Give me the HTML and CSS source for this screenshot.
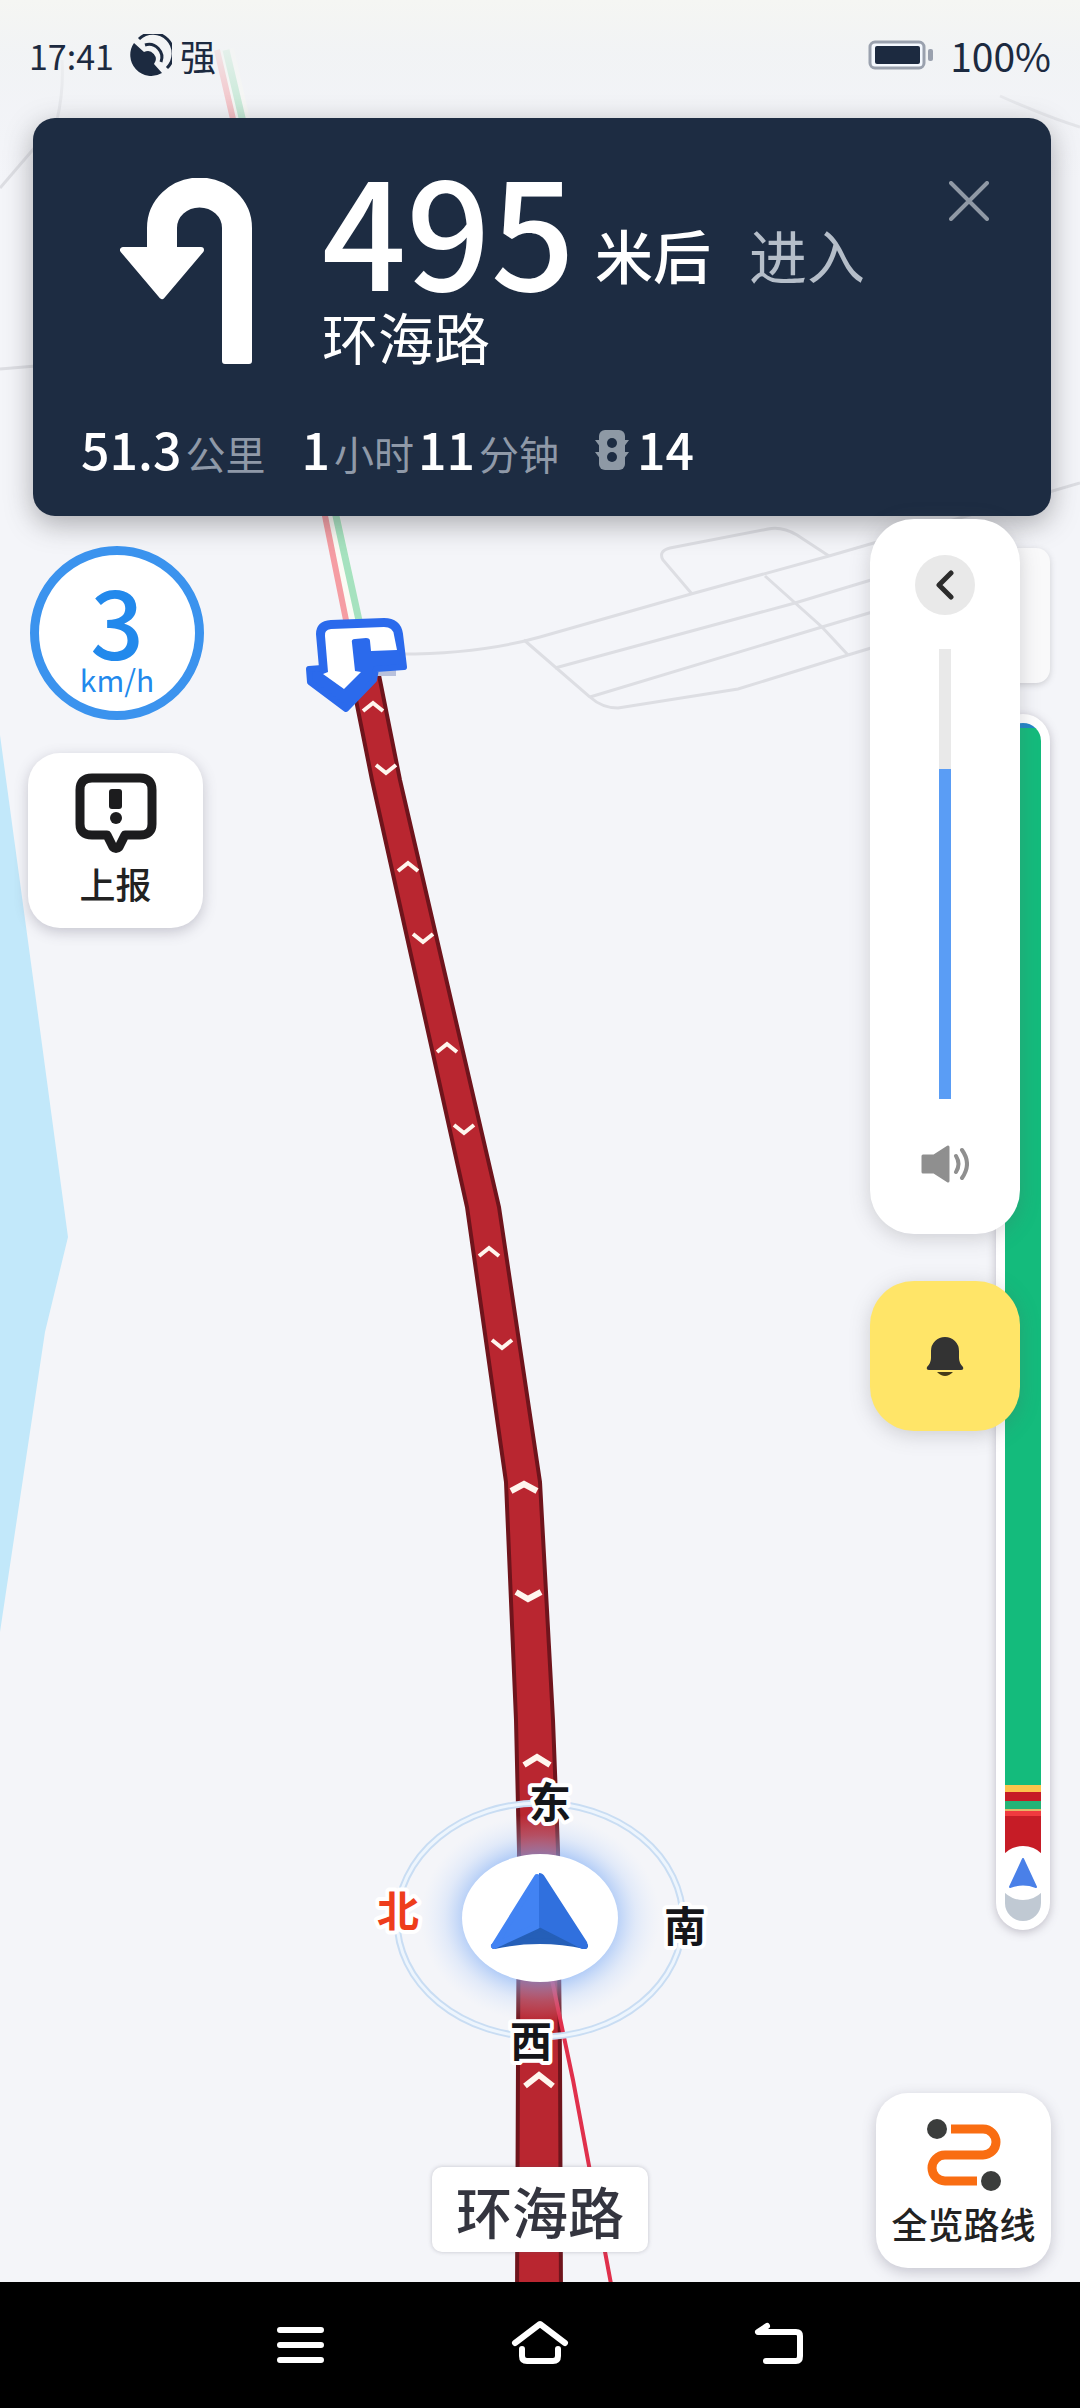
FILE: index.html
```html
<!DOCTYPE html>
<html lang="zh-CN">

<head>
  <meta charset="UTF-8">
  <meta name="viewport" content="width=device-width, initial-scale=1">
  <title>导航</title>
  <link rel="stylesheet" href="styles.css">
</head>
<body>
  <main class="map">
    <svg class="map-canvas" viewBox="0 0 1080 2282" preserveAspectRatio="xMidYMin slice" aria-hidden="true">
      <defs>
        <radialGradient id="glow">
          <stop offset="0.6" stop-color="#7aaaf5" stop-opacity="0.6"/>
          <stop offset="0.8" stop-color="#a9c8f8" stop-opacity="0.25"/>
          <stop offset="1" stop-color="#cfe0fb" stop-opacity="0"/>
        </radialGradient>
        <linearGradient id="fade" x1="0" y1="0" x2="0" y2="1">
          <stop offset="0" stop-color="#f5f6f3"/>
          <stop offset="0.3" stop-color="#f1f3f4" stop-opacity="0.8"/>
          <stop offset="1" stop-color="#eef0f5" stop-opacity="0"/>
        </linearGradient>
        <path id="up" d="M-10 4 L0 -4 L10 4"/>
        <path id="down" d="M-10 -4 L0 4 L10 -4"/>
      </defs>
      <!-- water -->
      <path fill="#c2e8fa" d="M0 735 L36 1000 L68 1237 L45 1332 L0 1632 Z"/>
      <!-- side roads -->
      <g fill="none" stroke="#dddee3" stroke-width="3">
        <path d="M400 654 Q480 654 540 637 L691 594 L829 556 L1080 483"/>
        <path d="M555 668 L795 603 L1000 541"/>
        <path d="M590 697 L822 627 L1000 574"/>
        <path d="M524 640 L590 697 Q602 708 618 708 L738 689 L848 655 L1000 609"/>
        <path d="M765 576 L822 627 L848 655"/>
        <path d="M692 594 L663 560 Q658 551 670 548 L768 529 Q782 526 797 535 L829 556"/>
        <path d="M0 188 L36 146 M0 369 L36 366 M62 60 Q64 90 57 120 M1000 96 Q1050 118 1080 127"/>
      </g>
      <!-- road ahead -->
      <g fill="none">
        <path stroke="#fbfbf5" stroke-width="18" d="M225 50 L331 516 L354 625"/>
        <path stroke="#f59da3" stroke-width="6" d="M217 50 L325 516 L347 625"/>
        <path stroke="#a6e2bf" stroke-width="7" d="M226 50 L336 516 L360 625"/>
      </g>
      <!-- route -->
      <path fill="#b92630" stroke="#6f141c" stroke-width="4" d="M354 690 L372 780 L421 1000 L467 1207 L506 1482 L516 1720 L519 1850 L518 2060 L517 2300 L561 2300 L560 2060 L558 1850 L553 1720 L540 1482 L499 1207 L451 1000 L400 780 L376 660 Z"/>
      <g fill="none" stroke="#fff6ee" stroke-width="4">
        <use href="#up" x="373" y="707"/>
        <use href="#down" x="386" y="769"/>
        <use href="#up" x="408" y="867"/>
        <use href="#down" x="423" y="938"/>
        <use href="#up" x="447" y="1048"/>
        <use href="#down" x="464" y="1129"/>
        <use href="#up" x="489" y="1252"/>
        <use href="#down" x="502" y="1344"/>
      </g>
      <g fill="none" stroke="#fff6ee" stroke-width="6">
        <path d="M511 1491 L524 1484 L537 1491 M516 1592 L528 1599 L541 1592"/>
        <path d="M524 1765 L537 1757 L550 1765 M525 2086 L539 2075 L553 2086"/>
      </g>
      <!-- turn marker -->
      <path fill="#b9c1dc" d="M376 664 h20 v12 h-20 z"/>
      <path fill="#2b6aec" stroke="#2b6aec" stroke-width="6" stroke-linejoin="round" d="M322 668 L319 634 Q319 624 331 623 L384 621 Q398 621 400 634 L404 667 L376 669 L374 680 L346 709 L310 682 L309 669 Z"/>
      <path fill="#fff" d="M325 636 Q324 630 331 629 L384 627 Q393 627 394 635 L397 650 L371 651 L370 641 Q370 638 366 638 L355 639 Q351 639 352 643 L355 671 L361 672 L344 689 L323 674 L328 672 Z"/>
      <!-- compass and car -->
      <path fill="none" stroke="#e0304c" stroke-width="4" d="M552 1980 L573 2080 L614 2300"/>
      <ellipse cx="540" cy="1918" rx="120" ry="104" fill="url(#glow)"/>
      <ellipse cx="540" cy="1920" rx="143" ry="117" fill="none" stroke="#c9ddf3" stroke-width="7"/>
      <ellipse cx="540" cy="1920" rx="143" ry="117" fill="none" stroke="#edf5fd" stroke-width="3"/>
      <ellipse cx="540" cy="1918" rx="78" ry="64" fill="#fff"/>
      <path fill="#255fb8" stroke="#255fb8" stroke-width="6" stroke-linejoin="round" d="M540 1928 L494 1946 Q540 1936 585 1946 Z"/>
      <path fill="#4283f3" stroke="#4283f3" stroke-width="6" stroke-linejoin="round" d="M537 1877 L494 1946 L537 1926 Z"/>
      <path fill="#3070de" d="M539 1873 Q543 1873 545 1877 L587 1942 Q590 1950 582 1949 L539 1927 Z"/>
      <g class="compass-text">
        <text x="550" y="1818">东</text>
        <text x="685" y="1942">南</text>
        <text x="531" y="2057">西</text>
        <text class="north" x="398" y="1927">北</text>
      </g>
      <rect width="1080" height="180" fill="url(#fade)"/>
    </svg>

    <header class="status">
      <span class="status-side">
        <time>17:41</time>
        <svg class="gps" viewBox="0 0 42 42" aria-hidden="true">
          <path fill="#1c2a40" d="M4 9 A21 21 0 0 0 32 39 L24 30 A8 8 0 0 0 14 18 Z"/>
          <g fill="none" stroke="#1c2a40" stroke-width="3">
            <path d="M9 5 A19 19 0 0 1 37 34"/>
            <path d="M15 11 A13 13 0 0 1 31 28"/>
          </g>
        </svg>
        <span>强</span>
      </span>
      <span class="status-side">
        <svg class="battery" viewBox="0 0 66 30" aria-hidden="true">
          <rect x="2" y="2" width="54" height="26" rx="5" fill="#f4f8fe" stroke="#9aa1ae" stroke-width="3"/>
          <rect x="7" y="6" width="45" height="18" rx="2" fill="#1c2a40"/>
          <rect x="60" y="9" width="5" height="12" rx="2" fill="#9aa1ae"/>
        </svg>
        <span class="percent">100%</span>
      </span>
    </header>

    <section class="banner">
      <div class="turn">
        <svg class="turn-icon" viewBox="0 0 132 186" aria-hidden="true">
          <path fill="#fff" stroke="#fff" stroke-width="6" stroke-linejoin="round" d="M30 72 V50 A49 47 0 0 1 129 50 V183 H105 V50 A25 23 0 0 0 54 50 V72 H81 L42 118 L3 72 Z"/>
        </svg>
        <div class="turn-text">
          <p class="distance"><strong>495</strong><span>米后</span><span class="enter">进入</span></p>
          <p class="road">环海路</p>
        </div>
        <button class="close" type="button" aria-label="关闭">
          <svg viewBox="0 0 40 40" aria-hidden="true"><path fill="none" stroke="#9099a5" stroke-width="4" stroke-linecap="round" d="M2 2 L38 38 M38 2 L2 38"/></svg>
        </button>
      </div>
      <p class="trip">
        <span><b>51.3</b>公里</span>
        <span><b>1</b>小时<b class="minutes">11</b>分钟</span>
        <span class="lights">
          <svg viewBox="0 0 34 40" aria-hidden="true">
            <path fill="#8e99a5" d="M0 10 H34 L28 18 H6 Z M0 22 H34 L28 30 H6 Z"/>
            <rect x="4" width="26" height="40" rx="6" fill="#8e99a5"/>
            <circle cx="17" cy="13" r="5" fill="#1d2c42"/>
            <circle cx="17" cy="27" r="5" fill="#1d2c42"/>
          </svg>
          <b>14</b>
        </span>
      </p>
    </section>

    <section class="middle">
      <div class="left">
        <div class="speed">
          <strong>3</strong>
          <span>km/h</span>
        </div>
        <button class="card report" type="button">
          <svg viewBox="0 0 82 80" aria-hidden="true">
            <path fill="none" stroke="#1c1c1e" stroke-width="9" stroke-linejoin="round" d="M17 5 H65 Q77 5 77 17 V51 Q77 62 65 62 H50 L44 74 Q41 77 38 74 L32 62 H17 Q5 62 5 51 V17 Q5 5 17 5 Z"/>
            <rect x="34" y="16" width="13" height="20" rx="3" fill="#1c1c1e"/>
            <circle cx="41" cy="45" r="6" fill="#1c1c1e"/>
          </svg>
          上报
        </button>
      </div>

      <div class="right">
        <div class="ghost"></div>
        <div class="traffic">
          <div class="traffic-bar">
            <i class="blue"></i>
            <i class="green"></i>
            <i class="yellow"></i>
            <i class="jam"></i>
            <i class="green-short"></i>
            <i class="yellow-short"></i>
            <i class="red"></i>
            <i class="jam-long"></i>
            <i class="passed"></i>
          </div>
          <span class="knob">
            <svg viewBox="0 0 28 31" aria-hidden="true"><path fill="#4a80e8" stroke="#4a80e8" stroke-width="2" stroke-linejoin="round" d="M14 1 L27 29 Q14 24 1 29 Z"/></svg>
          </span>
        </div>
        <div class="float">
          <div class="volume">
            <button class="back" type="button" aria-label="收起">
              <svg viewBox="0 0 18 30" aria-hidden="true"><path fill="none" stroke="#2c2c2c" stroke-width="5" stroke-linecap="round" stroke-linejoin="round" d="M15 3 L3 15 L15 27"/></svg>
            </button>
            <input class="slider" type="range" min="0" max="15" value="11" aria-label="音量">
            <svg class="speaker" viewBox="0 0 48 38" aria-hidden="true">
              <path fill="#8f8f8f" stroke="#8f8f8f" stroke-width="3" stroke-linejoin="round" d="M2 11 H13 L27 2 V36 L13 27 H2 Z"/>
              <path fill="none" stroke="#8f8f8f" stroke-width="4" stroke-linecap="round" d="M35 11 Q40 19 35 27 M41 5 Q51 19 41 33"/>
            </svg>
          </div>
          <button class="bell" type="button" aria-label="提醒">
            <svg viewBox="0 0 38 42" aria-hidden="true">
              <path fill="#333" d="M5 16 A14 14 0 0 1 33 16 V23 Q33 28 37 32 Q38 35 35 35 H3 Q0 35 1 32 Q5 28 5 23 Z"/>
              <path fill="#453a18" d="M11 37 H27 Q19 45 11 37 Z"/>
            </svg>
          </button>
        </div>
      </div>
    </section>

    <footer class="bottom">
      <span class="road-label">环海路</span>
      <button class="card overview" type="button">
        <svg viewBox="0 0 74 72" aria-hidden="true">
          <path fill="none" stroke="#f96d12" stroke-width="9" d="M24 10 H56 A13 13 0 0 1 56 36 H18 A13 13 0 0 0 18 62 H50"/>
          <circle cx="10" cy="10" r="10" fill="#3b3d3c"/>
          <circle cx="64" cy="62" r="10" fill="#3b3d3c"/>
        </svg>
        全览路线
      </button>
    </footer>
  </main>

  <nav class="system">
    <button type="button" aria-label="最近任务">
      <svg viewBox="0 0 60 50"><path d="M10 10 H51 M10 25 H51 M10 40 H51"/></svg>
    </button>
    <button type="button" aria-label="主页">
      <svg viewBox="0 0 60 50"><path d="M5 23 L30 4 L55 23 M12 29 V36 Q12 41 17 41 H43 Q48 41 48 36 V29"/></svg>
    </button>
    <button type="button" aria-label="返回">
      <svg viewBox="0 0 60 50"><path d="M17 6 L8 12 H46 Q50 12 50 16 V36 Q50 41 46 41 H16"/></svg>
    </button>
  </nav>
</body>

</html>
```
FILE: styles.css
```css
* {
  margin: 0;
  padding: 0;
  box-sizing: border-box;
}

body {
  min-height: 100vh;
  display: flex;
  flex-direction: column;
  background: #000;
  font-family: "Noto Sans CJK SC", "Noto Sans", sans-serif;
  font-size: 36px;
}

button {
  border: none;
  background: none;
  font: inherit;
  cursor: pointer;
}

svg {
  display: block;
}

.map {
  flex: 1;
  position: relative;
  display: flex;
  flex-direction: column;
  overflow: hidden;
  background: #f4f5f9;
}

/* map lies under all the panels */
.map-canvas {
  position: absolute;
  top: 0;
  left: 0;
  width: 100%;
  height: 100%;
}

.compass-text {
  font-size: 42px;
  font-weight: bold;
  text-anchor: middle;
  fill: #15161a;
  stroke: #fff;
  stroke-width: 8px;
  stroke-linejoin: round;
  paint-order: stroke;
}

.north {
  fill: #ee3d1c;
}

.status,
.banner,
.middle,
.bottom {
  position: relative;
}

.status {
  height: 118px;
  padding: 0 29px;
  display: flex;
  align-items: center;
  justify-content: space-between;
  color: #1c2a40;
}

.status-side {
  display: flex;
  align-items: center;
  gap: 16px;
  height: 52px;
  margin-bottom: 8px;
}

.status time {
  font-size: 34px;
}

.status .percent {
  font-size: 39px;
}

.gps {
  width: 42px;
  height: 42px;
  margin-right: -8px;
}

.battery {
  width: 66px;
  height: 30px;
}

.banner {
  height: 398px;
  margin: 0 29px 0 33px;
  padding: 60px 48px 0;
  border-radius: 22px;
  background: #1d2c42;
  color: #fff;
  box-shadow: 0 8px 28px rgba(60, 60, 65, 0.4);
}

.turn {
  display: flex;
  height: 240px;
}

.turn-icon {
  width: 132px;
  height: 186px;
  margin: 0 70px 0 39px;
}

.turn-text {
  flex: 1;
}

.distance {
  display: flex;
  align-items: flex-start;
  height: 120px;
  line-height: 152px;
  font-size: 58px;
  font-weight: 500;
}

.distance strong {
  margin-right: 20px;
  font-size: 148px;
  font-weight: 500;
  line-height: 98px;
}

.enter {
  margin-left: 38px;
  color: #b5bec9;
  font-weight: 400;
}

.road {
  font-size: 56px;
  line-height: 76px;
}

.close {
  width: 40px;
  height: 40px;
  margin: 3px 14px 0 0;
}

.trip {
  display: flex;
  align-items: baseline;
  gap: 36px;
  line-height: 60px;
  font-size: 40px;
  color: #8f99a8;
}

.trip b {
  margin-right: 4px;
  font-size: 50px;
  font-weight: 500;
  color: #fff;
}

.trip .minutes {
  margin-left: 4px;
}

.lights {
  display: flex;
  align-items: baseline;
  gap: 8px;
}

.lights svg {
  width: 34px;
  height: 40px;
}

.middle {
  flex: 1;
  display: flex;
  justify-content: space-between;
  padding: 30px 30px 163px 28px;
}

.left {
  display: flex;
  flex-direction: column;
  gap: 33px;
}

.speed {
  width: 174px;
  height: 174px;
  margin-left: 2px;
  border: 9px solid #3b93ee;
  border-radius: 50%;
  background: #fff;
  display: flex;
  flex-direction: column;
  align-items: center;
  color: #2289ec;
}

.speed strong {
  margin-top: 20px;
  font-size: 94px;
  font-weight: 500;
  line-height: 88px;
}

.speed span {
  font-size: 30px;
  line-height: 32px;
}

.card {
  display: flex;
  flex-direction: column;
  align-items: center;
  width: 175px;
  height: 175px;
  border-radius: 32px;
  background: #fff;
  color: #222;
  font-size: 36px;
  font-weight: 500;
  line-height: 44px;
  white-space: nowrap;
  box-shadow: 0 4px 14px rgba(90, 85, 110, 0.3);
}

.report svg {
  width: 82px;
  height: 80px;
  margin: 20px 0 8px;
}

.right {
  position: relative;
  display: flex;
  flex-direction: column;
  align-items: flex-end;
}

.ghost {
  width: 88px;
  height: 135px;
  margin: 2px 0 31px;
  border-radius: 14px;
  background: #f9f9fa;
  box-shadow: 0 2px 6px rgba(90, 90, 100, 0.25);
}

.traffic {
  flex: 1;
  position: relative;
  width: 54px;
  padding: 9px;
  border-radius: 27px;
  background: #fff;
  box-shadow: 0 2px 10px rgba(90, 80, 100, 0.35);
}

.traffic-bar {
  height: 100%;
  display: flex;
  flex-direction: column;
  border-radius: 18px;
  overflow: hidden;
}

.blue {
  height: 5px;
  background: #2486c8;
}

.green {
  flex: 1;
  background: #14bb7c;
}

.yellow {
  height: 7px;
  background: #fcc44c;
}

.jam {
  height: 9px;
  background: #c61c26;
}

.green-short {
  height: 8px;
  background: #25b377;
}

.yellow-short {
  height: 2px;
  background: #e5b766;
}

.red {
  height: 5px;
  background: #f03a3f;
}

.jam-long {
  height: 57px;
  background: #c61c26;
}

.passed {
  height: 48px;
  background: #c0c9d3;
}

.knob {
  position: absolute;
  bottom: 30px;
  left: 0;
  width: 54px;
  height: 54px;
  border-radius: 50%;
  background: #fff;
  display: flex;
  align-items: center;
  justify-content: center;
}

.knob svg {
  width: 28px;
  height: 31px;
}

/* volume panel and bell lie over the traffic bar */
.float {
  position: absolute;
  top: -27px;
  right: 30px;
  display: flex;
  flex-direction: column;
  gap: 47px;
}

.volume {
  width: 150px;
  height: 715px;
  padding-top: 36px;
  border-radius: 44px;
  background: #fff;
  display: flex;
  flex-direction: column;
  align-items: center;
  box-shadow: 0 4px 20px rgba(90, 90, 100, 0.25);
}

.back {
  width: 60px;
  height: 60px;
  border-radius: 50%;
  background: #e9e9e9;
  display: flex;
  align-items: center;
  justify-content: center;
}

.back svg {
  width: 18px;
  height: 30px;
}

.slider {
  appearance: none;
  writing-mode: vertical-lr;
  direction: rtl;
  width: 12px;
  height: 450px;
  margin: 34px 0 46px;
  background: linear-gradient(to top, #5a9df5 330px, #e9e9e9 330px);
}

.slider::-webkit-slider-thumb {
  appearance: none;
  width: 12px;
  height: 1px;
}

.speaker {
  width: 48px;
  height: 38px;
}

.bell {
  width: 150px;
  height: 150px;
  border-radius: 44px;
  background: #ffe568;
  display: flex;
  align-items: center;
  justify-content: center;
  box-shadow: 0 4px 20px rgba(90, 90, 100, 0.25);
}

.bell svg {
  width: 38px;
  height: 42px;
}

.bottom {
  display: grid;
  grid-template-columns: 1fr auto 1fr;
  align-items: end;
  padding: 0 29px 14px;
}

.road-label {
  grid-column: 2;
  margin-bottom: 16px;
  padding: 0 24px;
  border-radius: 10px;
  background: #fff;
  color: #34353f;
  font-size: 56px;
  font-weight: 500;
  line-height: 85px;
  box-shadow: 0 0 4px rgba(80, 80, 100, 0.3);
}

.overview {
  justify-self: end;
}

.overview svg {
  width: 74px;
  height: 72px;
  margin: 26px 0 10px;
}

.system {
  height: 126px;
  padding: 0 180px;
  display: flex;
  align-items: center;
  justify-content: space-around;
  background: #000;
}

.system svg {
  width: 60px;
  height: 50px;
  fill: none;
  stroke: #fff;
  stroke-width: 6px;
  stroke-linecap: round;
  stroke-linejoin: round;
}
```
